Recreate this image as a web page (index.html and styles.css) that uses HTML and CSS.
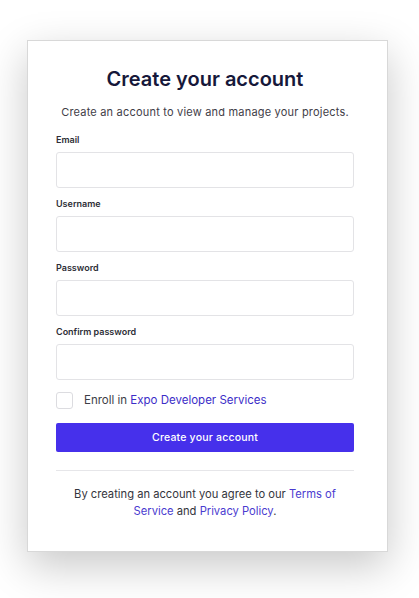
FILE: index.html
```html
<!DOCTYPE html>
<html>
<head>
<meta charset="utf-8">
<link rel="stylesheet" href="styles.css">
</head>
<body>
<div class="page">
  <div class="card">
    <h1 class="title">Create your account</h1>
    <p class="subtitle">Create an account to view and manage your projects.</p>
    <form class="form">
      <div class="field">
        <label class="label">Email</label>
        <div class="input"></div>
      </div>
      <div class="field">
        <label class="label">Username</label>
        <div class="input"></div>
      </div>
      <div class="field">
        <label class="label">Password</label>
        <div class="input"></div>
      </div>
      <div class="field">
        <label class="label">Confirm password</label>
        <div class="input"></div>
      </div>
      <div class="check-row">
        <span class="checkbox"></span>
        <span class="check-text">Enroll in <a class="link">Expo Developer Services</a></span>
      </div>
      <div class="button">Create your account</div>
    </form>
    <div class="divider"></div>
    <p class="footer">By creating an account you agree to our <a class="link">Terms of Service</a> and <a class="link">Privacy Policy</a>.</p>
  </div>
</div>
</body>
</html>
```
FILE: styles.css
```css
html, body {
  margin: 0;
  padding: 0;
  background: #ffffff;
}
body {
  width: 419px;
  height: 598px;
  overflow: hidden;
  font-family: Inter, "Noto Sans", sans-serif;
}
.page {
  padding: 40px 0 0 27px;
}
.card {
  box-sizing: border-box;
  width: 361px;
  height: 512px;
  background: #fff;
  border: 1px solid #d8d8d8;
  box-shadow: 0 14px 40px rgba(0,0,0,0.22);
  padding: 23px 33px 0 28px;
}
.title {
  margin: 0;
  text-align: center;
  font-size: 20px;
  font-weight: 600;
  color: #16183a;
  line-height: 30px;
}
.subtitle {
  margin: 10px 0 0;
  text-align: center;
  font-size: 11px;
  color: #3f4048;
  line-height: 16px;
  letter-spacing: 0.2px;
}
.form {
  margin-top: 14px;
  display: flex;
  flex-direction: column;
}
.field {
  display: flex;
  flex-direction: column;
  margin-bottom: 10px;
}
.label {
  font-size: 9px;
  font-weight: 600;
  color: #2d2e36;
  line-height: 12px;
  margin-bottom: 6px;
}
.input {
  height: 36px;
  box-sizing: border-box;
  border: 1px solid #e3e3e6;
  border-radius: 3px;
  background: #fff;
}
.check-row {
  display: flex;
  align-items: center;
  margin-top: 2px;
  height: 17px;
}
.checkbox {
  width: 17px;
  height: 17px;
  box-sizing: border-box;
  border: 1px solid #dcdce0;
  border-radius: 3px;
}
.check-text {
  margin-left: 11px;
  font-size: 11.5px;
  color: #3d3e46;
  position: relative;
  top: -1px;
}
.link {
  color: #3c2dc8;
  text-decoration: none;
}
.button {
  margin-top: 14px;
  height: 29px;
  background: #4630eb;
  border-radius: 2px;
  color: #fff;
  font-size: 10.5px;
  font-weight: 500;
  display: flex;
  align-items: center;
  justify-content: center;
  letter-spacing: 0.2px;
}
.divider {
  margin-top: 18px;
  height: 1px;
  background: #e6e6e9;
}
.footer {
  margin: 15px 8px 0;
  text-align: center;
  font-size: 11.2px;
  line-height: 17px;
  color: #34353d;
}
.footer .link {
  color: #4a3bd0;
}
```
